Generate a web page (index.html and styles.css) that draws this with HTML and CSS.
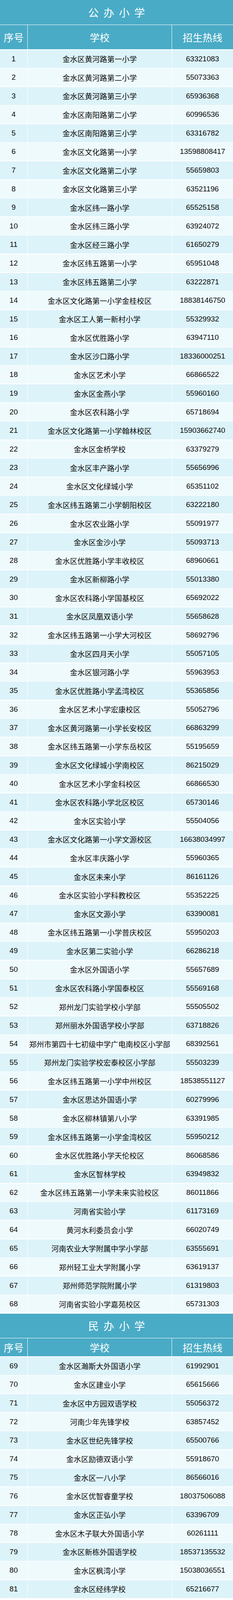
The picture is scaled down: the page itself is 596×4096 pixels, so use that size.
FILE: index.html
```html
<!DOCTYPE html>
<html lang="zh-CN">
<head>
<meta charset="utf-8">
<title>金水区小学招生热线</title>
<link rel="stylesheet" href="styles.css">
</head>
<body>
<div class="sheet">
  <section class="block">
    <div class="title">公办小学</div>
    <div class="row head tall"><div class="cell">序号</div><div class="cell">学校</div><div class="cell">招生热线</div></div>
    <div class="row data"><div class="cell">1</div><div class="cell">金水区黄河路第一小学</div><div class="cell">63321083</div></div>
    <div class="row data"><div class="cell">2</div><div class="cell">金水区黄河路第二小学</div><div class="cell">55073363</div></div>
    <div class="row data"><div class="cell">3</div><div class="cell">金水区黄河路第三小学</div><div class="cell">65936368</div></div>
    <div class="row data"><div class="cell">4</div><div class="cell">金水区南阳路第二小学</div><div class="cell">60996536</div></div>
    <div class="row data"><div class="cell">5</div><div class="cell">金水区南阳路第三小学</div><div class="cell">63316782</div></div>
    <div class="row data"><div class="cell">6</div><div class="cell">金水区文化路第一小学</div><div class="cell">13598808417</div></div>
    <div class="row data"><div class="cell">7</div><div class="cell">金水区文化路第二小学</div><div class="cell">55659803</div></div>
    <div class="row data"><div class="cell">8</div><div class="cell">金水区文化路第三小学</div><div class="cell">63521196</div></div>
    <div class="row data"><div class="cell">9</div><div class="cell">金水区纬一路小学</div><div class="cell">65525158</div></div>
    <div class="row data"><div class="cell">10</div><div class="cell">金水区纬三路小学</div><div class="cell">63924072</div></div>
    <div class="row data"><div class="cell">11</div><div class="cell">金水区经三路小学</div><div class="cell">61650279</div></div>
    <div class="row data"><div class="cell">12</div><div class="cell">金水区纬五路第一小学</div><div class="cell">65951048</div></div>
    <div class="row data"><div class="cell">13</div><div class="cell">金水区纬五路第二小学</div><div class="cell">63222871</div></div>
    <div class="row data"><div class="cell">14</div><div class="cell">金水区文化路第一小学金桂校区</div><div class="cell">18838146750</div></div>
    <div class="row data"><div class="cell">15</div><div class="cell">金水区工人第一新村小学</div><div class="cell">55329932</div></div>
    <div class="row data"><div class="cell">16</div><div class="cell">金水区优胜路小学</div><div class="cell">63947110</div></div>
    <div class="row data"><div class="cell">17</div><div class="cell">金水区沙口路小学</div><div class="cell">18336000251</div></div>
    <div class="row data"><div class="cell">18</div><div class="cell">金水区艺术小学</div><div class="cell">66866522</div></div>
    <div class="row data"><div class="cell">19</div><div class="cell">金水区金燕小学</div><div class="cell">55960160</div></div>
    <div class="row data"><div class="cell">20</div><div class="cell">金水区农科路小学</div><div class="cell">65718694</div></div>
    <div class="row data"><div class="cell">21</div><div class="cell">金水区文化路第一小学翰林校区</div><div class="cell">15903662740</div></div>
    <div class="row data"><div class="cell">22</div><div class="cell">金水区金桥学校</div><div class="cell">63379279</div></div>
    <div class="row data"><div class="cell">23</div><div class="cell">金水区丰产路小学</div><div class="cell">55656996</div></div>
    <div class="row data"><div class="cell">24</div><div class="cell">金水区文化绿城小学</div><div class="cell">65351102</div></div>
    <div class="row data"><div class="cell">25</div><div class="cell">金水区纬五路第二小学朝阳校区</div><div class="cell">63222180</div></div>
    <div class="row data"><div class="cell">26</div><div class="cell">金水区农业路小学</div><div class="cell">55091977</div></div>
    <div class="row data"><div class="cell">27</div><div class="cell">金水区金沙小学</div><div class="cell">55093713</div></div>
    <div class="row data"><div class="cell">28</div><div class="cell">金水区优胜路小学丰收校区</div><div class="cell">68960661</div></div>
    <div class="row data"><div class="cell">29</div><div class="cell">金水区新柳路小学</div><div class="cell">55013380</div></div>
    <div class="row data"><div class="cell">30</div><div class="cell">金水区农科路小学国基校区</div><div class="cell">65692022</div></div>
    <div class="row data"><div class="cell">31</div><div class="cell">金水区凤凰双语小学</div><div class="cell">55658628</div></div>
    <div class="row data"><div class="cell">32</div><div class="cell">金水区纬五路第一小学大河校区</div><div class="cell">58692796</div></div>
    <div class="row data"><div class="cell">33</div><div class="cell">金水区四月天小学</div><div class="cell">55057105</div></div>
    <div class="row data"><div class="cell">34</div><div class="cell">金水区银河路小学</div><div class="cell">55963953</div></div>
    <div class="row data"><div class="cell">35</div><div class="cell">金水区优胜路小学孟湾校区</div><div class="cell">55365856</div></div>
    <div class="row data"><div class="cell">36</div><div class="cell">金水区艺术小学宏康校区</div><div class="cell">55052796</div></div>
    <div class="row data"><div class="cell">37</div><div class="cell">金水区黄河路第一小学长安校区</div><div class="cell">66863299</div></div>
    <div class="row data"><div class="cell">38</div><div class="cell">金水区纬五路第一小学东岳校区</div><div class="cell">55195659</div></div>
    <div class="row data"><div class="cell">39</div><div class="cell">金水区文化绿城小学南校区</div><div class="cell">86215029</div></div>
    <div class="row data"><div class="cell">40</div><div class="cell">金水区艺术小学金科校区</div><div class="cell">66866530</div></div>
    <div class="row data"><div class="cell">41</div><div class="cell">金水区农科路小学北区校区</div><div class="cell">65730146</div></div>
    <div class="row data"><div class="cell">42</div><div class="cell">金水区实验小学</div><div class="cell">55504056</div></div>
    <div class="row data"><div class="cell">43</div><div class="cell">金水区文化路第一小学文源校区</div><div class="cell">16638034997</div></div>
    <div class="row data"><div class="cell">44</div><div class="cell">金水区丰庆路小学</div><div class="cell">55960365</div></div>
    <div class="row data"><div class="cell">45</div><div class="cell">金水区未来小学</div><div class="cell">86161126</div></div>
    <div class="row data"><div class="cell">46</div><div class="cell">金水区实验小学科教校区</div><div class="cell">55352225</div></div>
    <div class="row data"><div class="cell">47</div><div class="cell">金水区文源小学</div><div class="cell">63390081</div></div>
    <div class="row data"><div class="cell">48</div><div class="cell">金水区纬五路第一小学普庆校区</div><div class="cell">55950203</div></div>
    <div class="row data"><div class="cell">49</div><div class="cell">金水区第二实验小学</div><div class="cell">66286218</div></div>
    <div class="row data"><div class="cell">50</div><div class="cell">金水区外国语小学</div><div class="cell">55657689</div></div>
    <div class="row data"><div class="cell">51</div><div class="cell">金水区农科路小学国泰校区</div><div class="cell">55569168</div></div>
    <div class="row data"><div class="cell">52</div><div class="cell">郑州龙门实验学校小学部</div><div class="cell">55505502</div></div>
    <div class="row data"><div class="cell">53</div><div class="cell">郑州丽水外国语学校小学部</div><div class="cell">63718826</div></div>
    <div class="row data"><div class="cell">54</div><div class="cell">郑州市第四十七初级中学广电南校区小学部</div><div class="cell">68392561</div></div>
    <div class="row data"><div class="cell">55</div><div class="cell">郑州龙门实验学校宏泰校区小学部</div><div class="cell">55503239</div></div>
    <div class="row data"><div class="cell">56</div><div class="cell">金水区纬五路第一小学中州校区</div><div class="cell">18538551127</div></div>
    <div class="row data"><div class="cell">57</div><div class="cell">金水区思达外国语小学</div><div class="cell">60279996</div></div>
    <div class="row data"><div class="cell">58</div><div class="cell">金水区柳林镇第八小学</div><div class="cell">63391985</div></div>
    <div class="row data"><div class="cell">59</div><div class="cell">金水区纬五路第一小学金湾校区</div><div class="cell">55950212</div></div>
    <div class="row data"><div class="cell">60</div><div class="cell">金水区优胜路小学天伦校区</div><div class="cell">86068586</div></div>
    <div class="row data"><div class="cell">61</div><div class="cell">金水区智林学校</div><div class="cell">63949832</div></div>
    <div class="row data"><div class="cell">62</div><div class="cell">金水区纬五路第一小学未来实验校区</div><div class="cell">86011866</div></div>
    <div class="row data"><div class="cell">63</div><div class="cell">河南省实验小学</div><div class="cell">61173169</div></div>
    <div class="row data"><div class="cell">64</div><div class="cell">黄河水利委员会小学</div><div class="cell">66020749</div></div>
    <div class="row data"><div class="cell">65</div><div class="cell">河南农业大学附属中学小学部</div><div class="cell">63555691</div></div>
    <div class="row data"><div class="cell">66</div><div class="cell">郑州轻工业大学附属小学</div><div class="cell">63619137</div></div>
    <div class="row data"><div class="cell">67</div><div class="cell">郑州师范学院附属小学</div><div class="cell">61319803</div></div>
    <div class="row data"><div class="cell">68</div><div class="cell">河南省实验小学嘉苑校区</div><div class="cell">65731303</div></div>
  </section>
  <section class="block">
    <div class="title">民办小学</div>
    <div class="row head"><div class="cell">序号</div><div class="cell">学校</div><div class="cell">招生热线</div></div>
    <div class="row data"><div class="cell">69</div><div class="cell">金水区瀚斯大外国语小学</div><div class="cell">61992901</div></div>
    <div class="row data"><div class="cell">70</div><div class="cell">金水区建业小学</div><div class="cell">65615666</div></div>
    <div class="row data"><div class="cell">71</div><div class="cell">金水区中方园双语学校</div><div class="cell">55056372</div></div>
    <div class="row data"><div class="cell">72</div><div class="cell">河南少年先锋学校</div><div class="cell">63857452</div></div>
    <div class="row data"><div class="cell">73</div><div class="cell">金水区世纪先锋学校</div><div class="cell">65500766</div></div>
    <div class="row data"><div class="cell">74</div><div class="cell">金水区励德双语小学</div><div class="cell">55918670</div></div>
    <div class="row data"><div class="cell">75</div><div class="cell">金水区一八小学</div><div class="cell">86566016</div></div>
    <div class="row data"><div class="cell">76</div><div class="cell">金水区优智睿童学校</div><div class="cell">18037506088</div></div>
    <div class="row data"><div class="cell">77</div><div class="cell">金水区正弘小学</div><div class="cell">63396709</div></div>
    <div class="row data"><div class="cell">78</div><div class="cell">金水区木子联大外国语小学</div><div class="cell">60261111</div></div>
    <div class="row data"><div class="cell">79</div><div class="cell">金水区新栋外国语学校</div><div class="cell">18537135532</div></div>
    <div class="row data"><div class="cell">80</div><div class="cell">金水区枫湾小学</div><div class="cell">15038036551</div></div>
    <div class="row data"><div class="cell">81</div><div class="cell">金水区经纬学校</div><div class="cell">65216677</div></div>
  </section>
</div>
</body>
</html>
```

FILE: styles.css
```css
html, body {
  margin: 0;
  padding: 0;
  background: #ffffff;
}

body {
  font-family: "Liberation Sans", "Noto Sans CJK SC", sans-serif;
  color: #0a0a0a;
}

.sheet {
  display: flex;
  flex-direction: column;
  gap: 1.586px;
  width: 596px;
}

.block {
  display: flex;
  flex-direction: column;
  gap: 1.586px;
}

.title {
  height: 62.6px;
  background: #4aabc6;
  color: #ffffff;
  display: flex;
  align-items: center;
  justify-content: center;
  font-family: "Noto Sans CJK SC", sans-serif;
  font-size: 27px;
  letter-spacing: 12.3px;
  padding-left: 12.3px;
  box-sizing: border-box;
}

.block + .block .title {
  height: 61.85px;
}

.row {
  display: grid;
  grid-template-columns: 69.8px 367.2px 1fr;
  column-gap: 1.586px;
  height: 46px;
}

.cell {
  display: flex;
  align-items: center;
  justify-content: center;
  white-space: nowrap;
}

.head .cell {
  background: #4aabc6;
  color: #ffffff;
  font-family: "Noto Sans CJK SC", sans-serif;
  font-size: 25.4px;
}

.head.tall {
  height: 61.85px;
}

.data {
  font-size: 19px;
}

.data:nth-child(odd) .cell {
  background: #dcf3f9;
}

.data:nth-child(even) .cell {
  background: #effafd;
}
```
